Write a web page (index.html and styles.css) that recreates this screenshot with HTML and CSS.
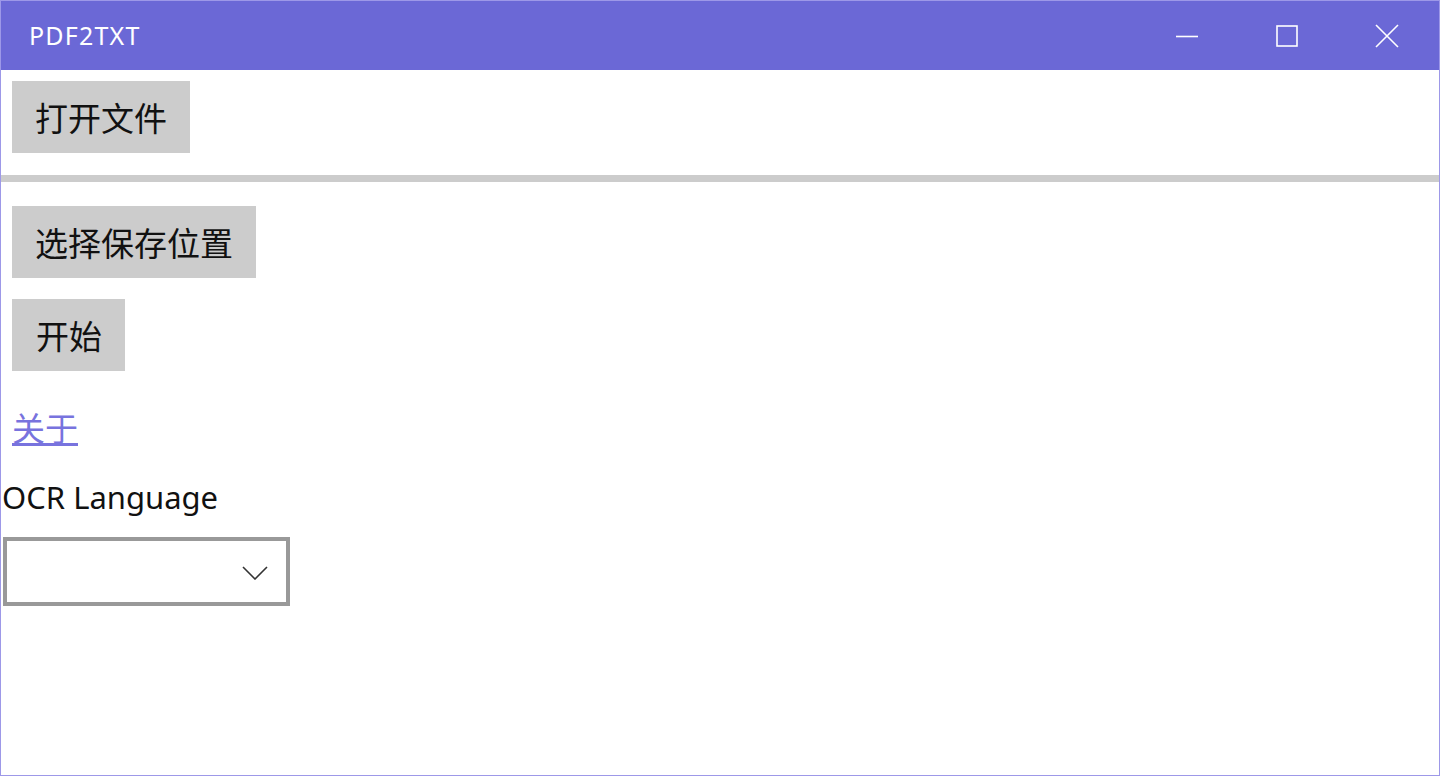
FILE: index.html
```html
<!DOCTYPE html>
<html lang="zh">

<head>
    <meta charset="utf-8" />
    <title>PDF2TXT</title>
    <link rel="stylesheet" href="styles.css">
</head>

<body>
    <div class="window">
        <!-- barre de titre -->
        <div class="titleBar">
            <span class="titleText">PDF2TXT</span>
            <div class="titleButtons">
                <div class="titleButton">
                    <svg width="22" height="22" viewBox="0 0 22 22"><path d="M0 11.5H22" stroke="#fff" stroke-width="1.6" fill="none" /></svg>
                </div>
                <div class="titleButton">
                    <svg width="22" height="22" viewBox="0 0 22 22"><rect x="1" y="1" width="20" height="20" stroke="#fff" stroke-width="1.6" fill="none" /></svg>
                </div>
                <div class="titleButton">
                    <svg width="24" height="24" viewBox="0 0 24 24"><path d="M1 1L23 23M23 1L1 23" stroke="#fff" stroke-width="1.6" fill="none" /></svg>
                </div>
            </div>
        </div>

        <div class="content">
            <div class="topPart">
                <button class="grayButton">打开文件</button>
            </div>
            <div class="separator"></div>
            <div class="bottomPart">
                <button class="grayButton">选择保存位置</button>
                <button class="grayButton startButton">开始</button>
                <a href="#" class="aboutLink">关于</a>
                <div class="ocrLabel">OCR Language</div>
                <div class="comboBox">
                    <svg width="26" height="14" viewBox="0 0 26 14"><path d="M1 1L13 13L25 1" stroke="#333" stroke-width="1.6" fill="none" /></svg>
                </div>
            </div>
        </div>
    </div>
</body>

</html>
```

FILE: styles.css
```css
html,
body {
    margin: 0;
    padding: 0;
    height: 100%;
}

body {
    font-family: "Noto Sans", "Noto Sans CJK SC", sans-serif;
    background: #fff;
}

.window {
    box-sizing: border-box;
    height: 776px;
    border: 1px solid #9d98e8;
    display: flex;
    flex-direction: column;
}

.titleBar {
    height: 69px;
    background-color: #6b68d6;
    display: flex;
    align-items: center;
    justify-content: space-between;
    color: #fff;
}

.titleText {
    padding-left: 28px;
    font-size: 25px;
    letter-spacing: 1.2px;
    padding-bottom: 1px;
}

.titleButtons {
    display: flex;
    height: 100%;
    padding-right: 2px;
}

.titleButton {
    width: 100px;
    display: flex;
    align-items: center;
    justify-content: center;
}

.content {
    display: flex;
    flex-direction: column;
}

.topPart {
    padding: 11px 0 22px;
}

.separator {
    height: 7px;
    background-color: #cccccc;
}

.bottomPart {
    display: flex;
    flex-direction: column;
    align-items: flex-start;
    padding-top: 24px;
}

.grayButton {
    display: block;
    height: 72px;
    padding: 0 23px;
    border: none;
    margin: 0 0 0 11px;
    background-color: #cccccc;
    color: #111;
    font-family: "Noto Sans CJK SC", sans-serif;
    font-size: 33px;
}

.startButton {
    margin-top: 21px;
    padding: 0 23px 0 24px;
}

.aboutLink {
    margin: 36px 0 0 11px;
    color: #7873de;
    font-family: "Noto Sans CJK SC", sans-serif;
    font-size: 33px;
    line-height: 40px;
}

.ocrLabel {
    margin: 30px 0 0 1px;
    font-size: 31px;
    line-height: 40px;
    color: #111;
}

.comboBox {
    box-sizing: border-box;
    margin: 20px 0 0 2px;
    width: 287px;
    height: 69px;
    border: 4px solid #999999;
    display: flex;
    align-items: center;
    justify-content: flex-end;
    padding-right: 18px;
    padding-top: 2px;
}
```
